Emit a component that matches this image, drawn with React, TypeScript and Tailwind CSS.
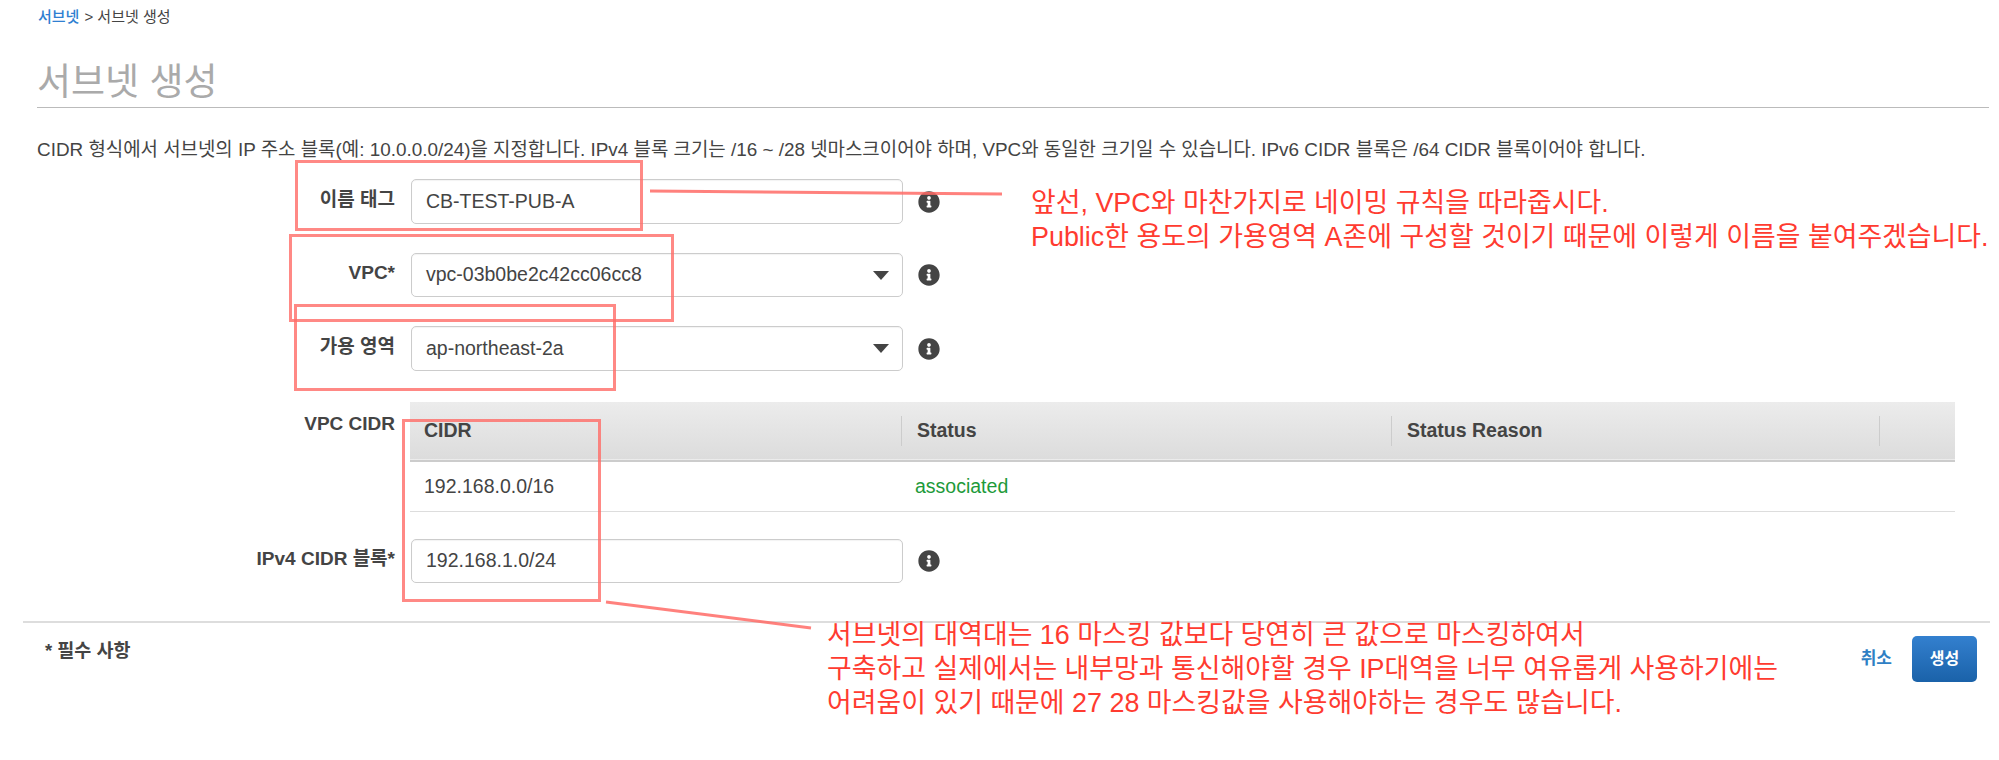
import { FaInfoCircle } from "react-icons/fa";

const font = "font-['Liberation_Sans','Noto_Sans_CJK_KR',sans-serif]";

function Info() {
  return <FaInfoCircle className="ml-[15px] shrink-0 text-[#444]" size={22} />;
}

function FieldBox({ value, select }: { value: string; select?: boolean }) {
  return (
    <div className="flex h-full w-[492px] items-center justify-between rounded-[5px] border border-[#ccc] bg-white pl-[14px] pr-[13px] text-[19.5px] text-[#444] shadow-[inset_0_1px_1px_rgba(0,0,0,0.05)]">
      <span>{value}</span>
      {select && (
        <svg width="16" height="9" viewBox="0 0 16 9">
          <polygon points="0,0 16,0 8,9" fill="#444" />
        </svg>
      )}
    </div>
  );
}

function Row({
  label,
  value,
  select,
  className,
}: {
  label: string;
  value: string;
  select?: boolean;
  className: string;
}) {
  return (
    <div className={`flex items-center ${className}`}>
      <label className="w-[395px] shrink-0 pb-[3px] text-right text-[19px] font-bold text-[#444]">
        {label}
      </label>
      <div className="ml-[16px] h-full">
        <FieldBox value={value} select={select} />
      </div>
      <Info />
    </div>
  );
}

function Annotations() {
  return (
    <>
      <div className="absolute left-[295px] top-[160px] h-[71px] w-[348px] border-[3px] border-[#ff6b66]/80" />
      <div className="absolute left-[289px] top-[234px] h-[88px] w-[385px] border-[3px] border-[#ff6b66]/80" />
      <div className="absolute left-[294px] top-[304px] h-[87px] w-[322px] border-[3px] border-[#ff6b66]/80" />
      <div className="absolute left-[402px] top-[419px] h-[183px] w-[199px] border-[3px] border-[#ff6b66]/80" />
      <svg className="absolute left-0 top-0" width="1999" height="760">
        <line x1="650" y1="191" x2="1002" y2="194" stroke="#ff6b66" strokeOpacity="0.85" strokeWidth="3" />
        <line x1="606" y1="602" x2="811" y2="628" stroke="#ff6b66" strokeOpacity="0.85" strokeWidth="3" />
      </svg>
      <div className="absolute left-[1031px] top-[186px] text-[26.9px] leading-[34px] whitespace-nowrap text-[#ff3b30]">
        <p>앞선, VPC와 마찬가지로 네이밍 규칙을 따라줍시다.</p>
        <p>Public한 용도의 가용영역 A존에 구성할 것이기 때문에 이렇게 이름을 붙여주겠습니다.</p>
      </div>
      <div className="absolute left-[827px] top-[618px] text-[26.9px] leading-[34px] whitespace-nowrap text-[#ff3b30]">
        <p>서브넷의 대역대는 16 마스킹 값보다 당연히 큰 값으로 마스킹하여서</p>
        <p>구축하고 실제에서는 내부망과 통신해야할 경우 IP대역을 너무 여유롭게 사용하기에는</p>
        <p>어려움이 있기 때문에 27 28 마스킹값을 사용해야하는 경우도 많습니다.</p>
      </div>
    </>
  );
}

export default function App() {
  return (
    <div className={`relative h-[760px] w-[1999px] overflow-hidden bg-white ${font}`}>
      <div className="flex h-[34px] items-center pl-[38px] text-[15px] text-[#444]">
        <a href="#" className="font-medium text-[#2f7fd1]">서브넷</a>
        <span className="ml-[5px]">&gt; 서브넷 생성</span>
      </div>

      <h1 className="ml-[37px] mr-[10px] flex h-[74px] items-end border-b border-[#bbb] pb-[2px] text-[37px] leading-[44px] font-normal text-[#aaa]">
        서브넷 생성
      </h1>

      <p className="ml-[37px] mt-[30px] h-[24px] text-[18.9px] leading-[24px] whitespace-nowrap text-[#444]">
        CIDR 형식에서 서브넷의 IP 주소 블록(예: 10.0.0.0/24)을 지정합니다. IPv4 블록 크기는 /16 ~ /28 넷마스크이어야 하며, VPC와 동일한 크기일 수 있습니다. IPv6 CIDR 블록은 /64 CIDR 블록이어야 합니다.
      </p>

      <Row className="mt-[17px] h-[45px]" label="이름 태그" value="CB-TEST-PUB-A" />
      <Row className="mt-[29px] h-[44px]" label="VPC*" value="vpc-03b0be2c42cc06cc8" select />
      <Row className="mt-[29px] h-[45px]" label="가용 영역" value="ap-northeast-2a" select />

      <div className="mt-[31px] flex">
        <div className="w-[395px] shrink-0 pt-[8px] text-right text-[19px] font-bold text-[#444]">VPC CIDR</div>
        <table className="ml-[15px] w-[1545px] border-collapse text-[19.5px] text-[#444]">
          <thead>
            <tr className="h-[59px] border-b-2 border-[#ccc] bg-gradient-to-b from-[#ececec] to-[#dcdcdc]">
              <th className="w-[491px] pl-[14px] text-left font-bold">CIDR</th>
              <th className="w-[490px] pl-[15px] text-left font-bold">
                <div className="-ml-[15px] border-l border-[#ccc] pl-[15px]">Status</div>
              </th>
              <th className="pl-[15px] text-left font-bold">
                <div className="-ml-[15px] w-[489px] border-x border-[#ccc] pl-[15px]">Status Reason</div>
              </th>
            </tr>
          </thead>
          <tbody>
            <tr className="h-[50px] border-b border-[#ddd]">
              <td className="pl-[14px]">192.168.0.0/16</td>
              <td className="pl-[14px] text-[#1d9a3a]">associated</td>
              <td />
            </tr>
          </tbody>
        </table>
      </div>

      <Row className="mt-[27px] h-[44px]" label="IPv4 CIDR 블록*" value="192.168.1.0/24" />

      <div className="ml-[23px] mr-[9px] mt-[38px] flex h-[62px] items-start justify-between border-t-2 border-[#ddd]">
        <span className="ml-[22px] mt-[14px] text-[18.5px] font-bold text-[#444]">* 필수 사항</span>
        <div className="mr-[13px] mt-[13px] flex items-center">
          <a href="#" className="text-[17px] font-bold text-[#2f7fc4]">취소</a>
          <button className="ml-[20px] h-[46px] w-[65px] rounded-[5px] bg-gradient-to-b from-[#3380cf] to-[#1a62a9] text-[16px] font-bold text-white">
            생성
          </button>
        </div>
      </div>

      <Annotations />
    </div>
  );
}
